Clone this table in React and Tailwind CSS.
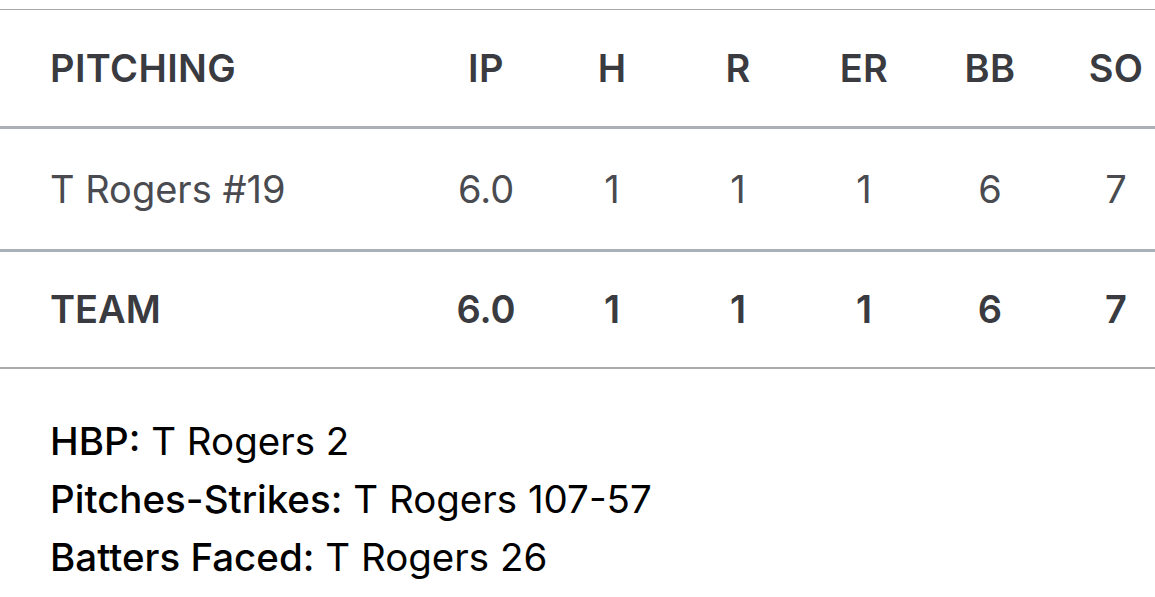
import React from "react";

const cols = ["IP", "H", "R", "ER", "BB", "SO"];

const rows = [
  { name: "T Rogers #19", stats: ["6.0", "1", "1", "1", "6", "7"], team: false },
  { name: "TEAM", stats: ["6.0", "1", "1", "1", "6", "7"], team: true },
];

const notes = [
  ["HBP:", "T Rogers 2"],
  ["Pitches-Strikes:", "T Rogers 107-57"],
  ["Batters Faced:", "T Rogers 26"],
];

const App = () => {
  return (
    <div
      className="w-[1155px] h-[597px] overflow-hidden bg-white pt-[9px]"
      style={{ fontFamily: "Inter, 'Noto Sans', sans-serif" }}
    >
      <div className="w-[1240px]">
        {/* header */}
        <div className="grid grid-cols-[423px_repeat(6,126px)] items-center h-[120px] border-t border-t-[#a8a8a8] border-b-[3px] border-b-[#abb0b7] text-[38px] font-semibold text-[#3a3b40] tracking-[0.01em]">
          <div className="pl-[50px]">PITCHING</div>
          {cols.map((c) => (
            <div key={c} className="text-center">{c}</div>
          ))}
        </div>

        {rows.map((r) => (
          <div
            key={r.name}
            className={
              r.team
                ? "grid grid-cols-[423px_repeat(6,126px)] items-center h-[117px] border-b-2 border-b-[#aaaaaa] text-[38px] font-semibold text-[#3a3b40]"
                : "grid grid-cols-[423px_repeat(6,126px)] items-center h-[123px] border-b-[3px] border-b-[#a9b1b6] text-[38px] text-[#4a4b50]"
            }
          >
            <div className="pl-[50px]">{r.name}</div>
            {r.stats.map((s, i) => (
              <div key={i} className="text-center">{s}</div>
            ))}
          </div>
        ))}
      </div>

      {/* footnotes */}
      <div className="pl-[50px] pt-[49px] flex flex-col gap-[12px] text-[38.5px] leading-[46px] text-black">
        {notes.map(([k, v]) => (
          <div key={k}>
            <span className="font-medium">{k}</span> {v}
          </div>
        ))}
      </div>
    </div>
  );
};

export default App;
